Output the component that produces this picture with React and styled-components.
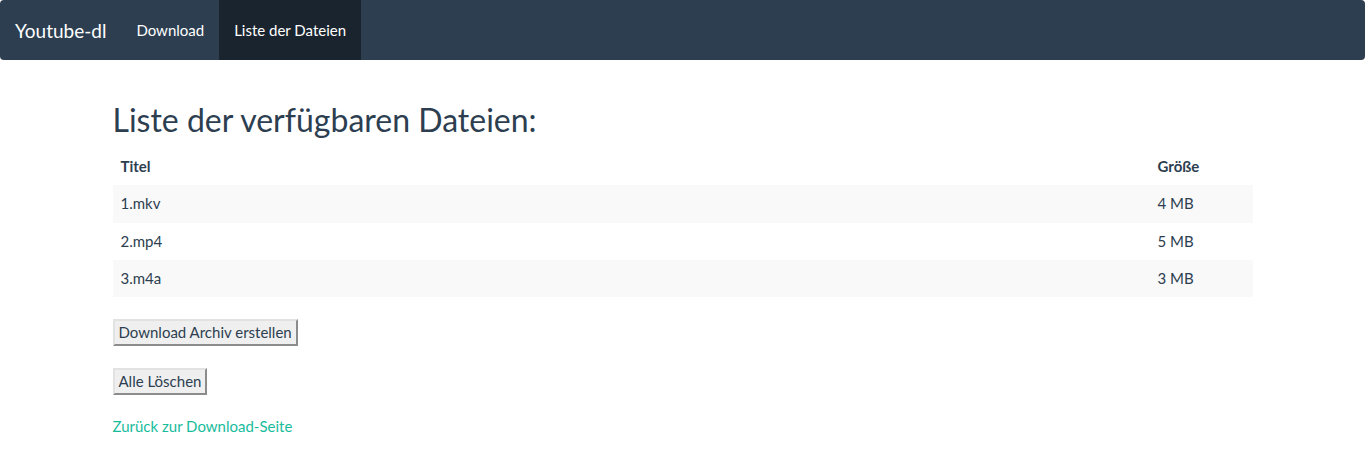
import React from "react";
import styled, { createGlobalStyle } from "styled-components";

const GlobalStyle = createGlobalStyle`
  body {
    margin: 0;
    background: #ffffff;
    font-family: Lato, "Helvetica Neue", Arial, sans-serif;
    font-size: 15px;
    line-height: 1.428571;
    color: #2c3e50;
  }
`;

const files = [
  { name: "1.mkv", size: "4 MB" },
  { name: "2.mp4", size: "5 MB" },
  { name: "3.m4a", size: "3 MB" },
];

const App = () => {
  return (
    <>
      <GlobalStyle />
      <Navbar>
        <Brand href="#">Youtube-dl</Brand>
        <NavList>
          <NavItem>
            <NavLink href="#">Download</NavLink>
          </NavItem>
          <NavItem>
            <NavLink href="#" $active>
              Liste der Dateien
            </NavLink>
          </NavItem>
        </NavList>
      </Navbar>
      <Container>
        <Heading>Liste der verfügbaren Dateien:</Heading>
        <Table>
          <thead>
            <tr>
              <Th>Titel</Th>
              <Th $size>Größe</Th>
            </tr>
          </thead>
          <tbody>
            {files.map((f, i) => (
              <Row key={f.name} $striped={i % 2 === 0}>
                <Td>{f.name}</Td>
                <Td>{f.size}</Td>
              </Row>
            ))}
          </tbody>
        </Table>
        <Actions>
          <Button type="button">Download Archiv erstellen</Button>
          <Button type="button">Alle Löschen</Button>
          <BackLink href="#">Zurück zur Download-Seite</BackLink>
        </Actions>
      </Container>
    </>
  );
};

const Navbar = styled.nav`
  display: flex;
  align-items: stretch;
  height: 60px;
  background: #2c3e50;
  border-radius: 4px;
`;

const Brand = styled.a`
  padding: 19.5px 15px;
  font-size: 19px;
  line-height: 21px;
  color: #ffffff;
  text-decoration: none;
`;

const NavList = styled.ul`
  display: flex;
  margin: 0;
  padding: 0;
  list-style: none;
`;

const NavItem = styled.li`
  display: flex;
`;

const NavLink = styled.a`
  padding: 20px 15px;
  line-height: 20px;
  color: #ffffff;
  text-decoration: none;
  background: ${(p) => (p.$active ? "#1a242f" : "transparent")};
`;

const Container = styled.div`
  width: 1140px;
  margin: 0 auto;
  padding: 0 15px;
`;

const Heading = styled.h2`
  margin: 42px 0 10.5px;
  font-size: 32px;
  font-weight: 400;
  line-height: 1.1;
  color: #2c3e50;
`;

const Table = styled.table`
  width: 100%;
  border-collapse: collapse;
  border-spacing: 0;
  margin-bottom: 21px;
`;

const Th = styled.th`
  width: ${(p) => (p.$size ? "87px" : "auto")};
  padding: 8px;
  line-height: 1.428571;
  text-align: left;
  font-weight: 700;
`;

const Row = styled.tr`
  background: ${(p) => (p.$striped ? "#f9f9f9" : "transparent")};
`;

const Td = styled.td`
  padding: 8px;
  line-height: 1.428571;
`;

const Actions = styled.div`
  display: flex;
  flex-direction: column;
  align-items: flex-start;
  padding-top: 1px;
  gap: 22px;
`;

const Button = styled.button`
  padding: 1px 4px;
  font-family: inherit;
  font-size: 15px;
  line-height: 21px;
  color: #2c3e50;
  background: #efefef;
  border: 2px solid;
  border-color: #e2e2e2 #8c8c8c #8c8c8c #e2e2e2;
  border-radius: 0;
  cursor: pointer;
`;

const BackLink = styled.a`
  margin-top: -1px;
  line-height: 21px;
  color: #18bc9c;
  text-decoration: none;
`;

export default App;
